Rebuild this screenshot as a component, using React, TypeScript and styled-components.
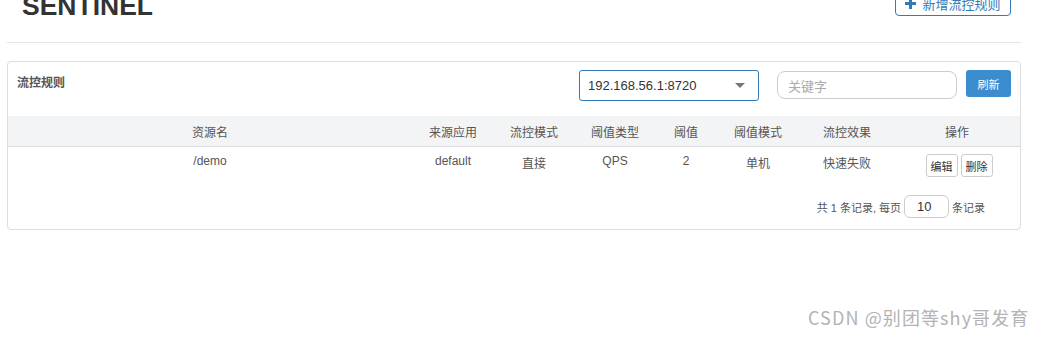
import React from 'react'
import styled, { createGlobalStyle } from 'styled-components'

const GlobalStyle = createGlobalStyle`
  html, body {
    margin: 0;
    padding: 0;
    background: #fff;
    overflow: hidden;
  }
  body {
    font-family: "Liberation Sans", "Noto Sans CJK SC", Arial, sans-serif;
    font-size: 12px;
    color: #555;
  }
`

const Page = styled.div`
  position: relative;
  width: 1045px;
  height: 337px;
  overflow: hidden;
`

const Content = styled.div`
  width: 1014px;
  margin-left: 7px;
`

const Header = styled.div`
  display: flex;
  justify-content: space-between;
  align-items: flex-end;
  height: 17px;
  padding: 0 10px 0 15px;
`

const Brand = styled.h1`
  margin: 0 0 -2px 0;
  font-family: "Liberation Sans", Arial, sans-serif;
  font-size: 26.5px;
  font-weight: 700;
  line-height: 1;
  color: #333;
`

const AddButton = styled.button`
  display: flex;
  align-items: center;
  justify-content: center;
  gap: 6px;
  box-sizing: border-box;
  height: 34px;
  width: 116px;
  margin-bottom: 1px;
  padding: 8px 0 0 0;
  border: 1px solid #337ab7;
  border-radius: 4px;
  background: #fff;
  color: #337ab7;
  white-space: nowrap;
  font-family: "Liberation Sans", "Noto Sans CJK SC", sans-serif;
  font-size: 13px;
`

const Divider = styled.div`
  margin-top: 25px;
  border-top: 1px solid #e5e5e5;
`

const Panel = styled.div`
  margin-top: 18px;
  border: 1px solid #ddd;
  border-radius: 4px;
  height: 167px;
  display: flex;
  flex-direction: column;
`

const Toolbar = styled.div`
  display: flex;
  align-items: flex-start;
  box-sizing: border-box;
  height: 54px;
  padding: 8px 9px 0 9px;
`

const PanelTitle = styled.div`
  flex: 1;
  padding-top: 3px;
  font-family: "Noto Sans CJK SC", sans-serif;
  font-size: 12px;
  font-weight: 700;
  color: #555;
`

const Select = styled.div`
  display: flex;
  align-items: center;
  justify-content: space-between;
  box-sizing: border-box;
  width: 180px;
  height: 31px;
  padding: 0 13px 0 8px;
  border: 1px solid #337ab7;
  border-radius: 3px;
  font-size: 13px;
  color: #333;
`

const Caret = styled.span`
  width: 0;
  height: 0;
  border-left: 5px solid transparent;
  border-right: 5px solid transparent;
  border-top: 5px solid #777;
`

const SearchInput = styled.div`
  box-sizing: border-box;
  width: 180px;
  height: 28px;
  margin-left: 18px;
  margin-top: 1px;
  padding: 0 10px;
  display: flex;
  align-items: center;
  border: 1px solid #ccc;
  border-radius: 8px;
  font-family: "Noto Sans CJK SC", sans-serif;
  font-size: 13px;
  color: #aaa;
`

const RefreshButton = styled.button`
  box-sizing: border-box;
  width: 45px;
  height: 27px;
  margin-left: 9px;
  border: none;
  border-radius: 3px;
  background: #3c8dd0;
  color: #fff;
  font-family: "Noto Sans CJK SC", sans-serif;
  font-size: 11px;
`

const Table = styled.table`
  width: 100%;
  border-collapse: collapse;
  table-layout: fixed;
`

const HeadCell = styled.th<{ w: number }>`
  width: ${p => p.w}px;
  height: 30px;
  padding: 0;
  background: #f3f4f6;
  border-bottom: 1px solid #ddd;
  font-family: "Noto Sans CJK SC", sans-serif;
  font-size: 12px;
  font-weight: 400;
  color: #555;
  text-align: center;
`

const Cell = styled.td`
  height: 28px;
  padding: 7px 0 0 0;
  vertical-align: top;
  font-family: "Liberation Sans", "Noto Sans CJK SC", sans-serif;
  font-size: 12px;
  color: #555;
  text-align: center;
`

const Actions = styled.div`
  display: flex;
  justify-content: center;
  gap: 3px;
  padding-left: 4px;
`

const SmallButton = styled.button`
  box-sizing: border-box;
  height: 23px;
  padding: 0 4px;
  border: 1px solid #ccc;
  border-radius: 3px;
  background: #fff;
  font-family: "Noto Sans CJK SC", sans-serif;
  font-size: 11px;
  color: #333;
`

const Pager = styled.div`
  display: flex;
  align-items: center;
  justify-content: flex-end;
  gap: 3px;
  margin-top: 13px;
  padding-right: 35px;
  font-family: "Liberation Sans", "Noto Sans CJK SC", sans-serif;
  font-size: 11px;
  color: #555;
`

const PageSize = styled.div`
  box-sizing: border-box;
  width: 45px;
  height: 23px;
  display: flex;
  align-items: center;
  padding-left: 12px;
  border: 1px solid #ccc;
  border-radius: 6px;
  font-size: 13px;
  color: #333;
`

const Watermark = styled.div`
  position: absolute;
  left: 808px;
  top: 304px;
  font-family: "Noto Sans CJK SC", sans-serif;
  font-size: 18px;
  letter-spacing: 1.1px;
  color: #b3b3b3;
`

const columns = [
  { label: '资源名', w: 404 },
  { label: '来源应用', w: 82 },
  { label: '流控模式', w: 80 },
  { label: '阈值类型', w: 82 },
  { label: '阈值', w: 60 },
  { label: '阈值模式', w: 84 },
  { label: '流控效果', w: 94 },
  { label: '操作', w: 126 },
]

const rows = [
  ['/demo', 'default', '直接', 'QPS', '2', '单机', '快速失败'],
]

export default function App() {
  return (
    <Page>
      <GlobalStyle />
      <Content>
        <Header>
          <Brand>SENTINEL</Brand>
          <AddButton>
            <svg width="11" height="11" viewBox="0 0 11 11">
              <path d="M4 0h3v4h4v3H7v4H4V7H0V4h4z" fill="#337ab7" />
            </svg>
            新增流控规则
          </AddButton>
        </Header>
        <Divider />
        <Panel>
          <Toolbar>
            <PanelTitle>流控规则</PanelTitle>
            <Select>
              <span>192.168.56.1:8720</span>
              <Caret />
            </Select>
            <SearchInput>关键字</SearchInput>
            <RefreshButton>刷新</RefreshButton>
          </Toolbar>
          <Table>
            <thead>
              <tr>
                {columns.map(c => (
                  <HeadCell key={c.label} w={c.w}>{c.label}</HeadCell>
                ))}
              </tr>
            </thead>
            <tbody>
              {rows.map(r => (
                <tr key={r[0]}>
                  {r.map((v, i) => (
                    <Cell key={i}>{v}</Cell>
                  ))}
                  <Cell>
                    <Actions>
                      <SmallButton>编辑</SmallButton>
                      <SmallButton>删除</SmallButton>
                    </Actions>
                  </Cell>
                </tr>
              ))}
            </tbody>
          </Table>
          <Pager>
            <span>共 1 条记录, 每页</span>
            <PageSize>10</PageSize>
            <span>条记录</span>
          </Pager>
        </Panel>
      </Content>
      <Watermark>CSDN @别团等shy哥发育</Watermark>
    </Page>
  )
}
